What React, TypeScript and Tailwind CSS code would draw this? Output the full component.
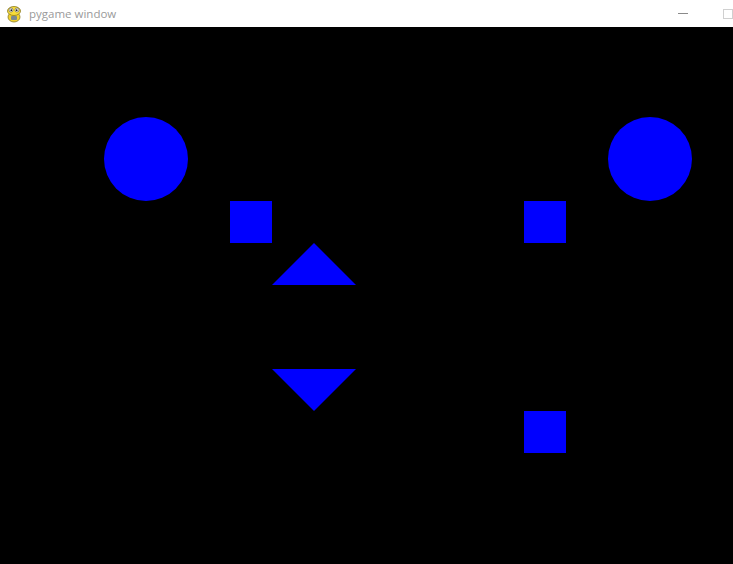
import { ReactNode } from "react";

// pygame snake icon, roughly
function PyIcon() {
  return (
    <svg width="16" height="18" viewBox="0 0 16 18" className="shrink-0">
      <ellipse cx="8" cy="12" rx="6" ry="5" fill="#f2d22e" stroke="#8a7a20" strokeWidth="0.8" />
      <ellipse cx="8" cy="6" rx="6.5" ry="4.5" fill="#f7dc3a" stroke="#8a7a20" strokeWidth="0.8" />
      <circle cx="5" cy="5" r="2" fill="#fff" stroke="#555" strokeWidth="0.6" />
      <circle cx="11" cy="5" r="2" fill="#fff" stroke="#555" strokeWidth="0.6" />
      <circle cx="5.3" cy="5.2" r="0.9" fill="#222" />
      <circle cx="10.7" cy="5.2" r="0.9" fill="#222" />
      <rect x="5" y="11" width="6" height="4" rx="1" fill="#7d8a8f" />
    </svg>
  );
}

function TitleBar({ children }: { children: ReactNode }) {
  return (
    <div className="flex h-[27px] items-center bg-white pl-[6px]">
      <PyIcon />
      <span className="ml-[7px] font-['Open_Sans',sans-serif] text-[11.5px] leading-none text-[#9a9a9a]">
        {children}
      </span>
      <div className="ml-auto flex items-center">
        <span className="block h-px w-[10px] bg-[#8a8a8a]" />
        <span className="ml-[35px] block h-[10px] w-[10px] border border-[#d0d0d0]" />
      </div>
    </div>
  );
}

export default function App() {
  return (
    <div className="flex h-[564px] w-[733px] flex-col overflow-hidden bg-black">
      <TitleBar>pygame window</TitleBar>
      <svg width="733" height="537" viewBox="0 27 733 537" className="block">
        <circle cx="146" cy="159" r="42" fill="#0000ff" />
        <circle cx="650" cy="159" r="42" fill="#0000ff" />
        <rect x="230" y="201" width="42" height="42" fill="#0000ff" />
        <rect x="524" y="201" width="42" height="42" fill="#0000ff" />
        <rect x="524" y="411" width="42" height="42" fill="#0000ff" />
        <polygon points="272,285 314,243 356,285" fill="#0000ff" />
        <polygon points="272,369 356,369 314,411" fill="#0000ff" />
      </svg>
    </div>
  );
}
